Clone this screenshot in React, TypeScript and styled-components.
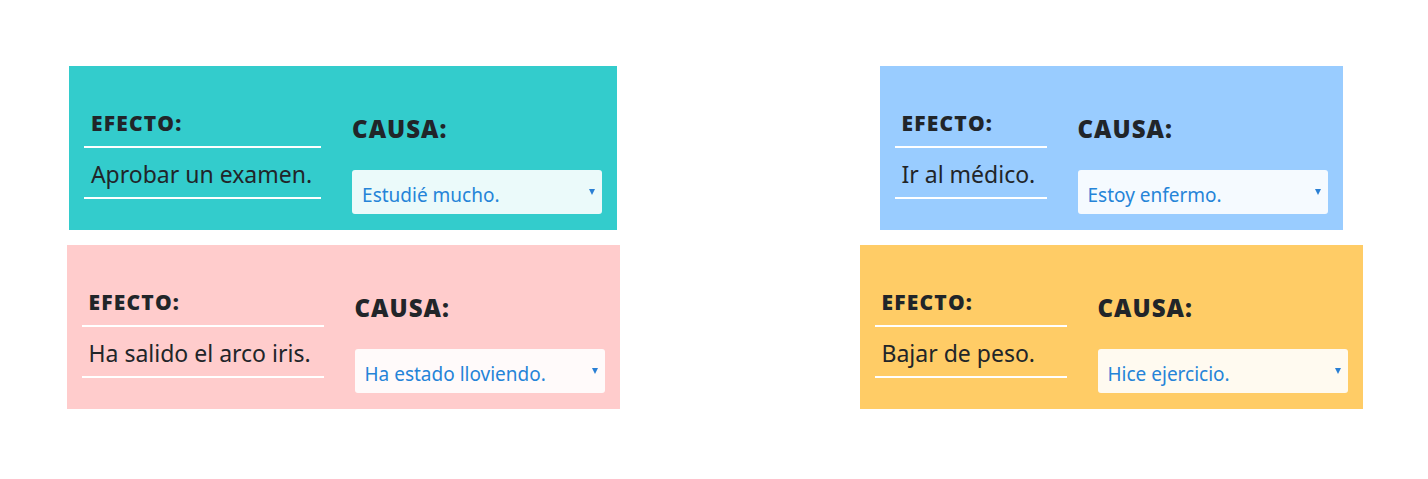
import React from 'react';
import styled, { createGlobalStyle } from 'styled-components';

const GlobalStyle = createGlobalStyle`
  html, body {
    margin: 0;
    padding: 0;
    background: #ffffff;
    font-family: "Noto Sans", "Open Sans", sans-serif;
    color: #212529;
  }
`;

const Board = styled("div")`
  display: grid;
  grid-template-columns: 606px 582px;
  column-gap: 174px;
  row-gap: 15px;
  padding: 66px 0 0 40px;
  justify-items: center;
`;

const Card = styled("div")<{ $bg: string }>`
  display: inline-flex;
  align-items: flex-start;
  gap: 31px;
  background: ${(p) => p.$bg};
  padding: 45px 15px 16px 15px;
  box-sizing: border-box;
  height: 164px;
`;

const EffectColumn = styled("div")<{ $minWidth: number }>`
  display: flex;
  flex-direction: column;
  min-width: ${(p) => p.$minWidth}px;
`;

const EffectLabel = styled("div")`
  font-family: "Open Sans", sans-serif;
  font-weight: 800;
  font-size: 21px;
  letter-spacing: 1.2px;
  line-height: 25px;
  padding: 0 8px 10px 7px;
  border-bottom: 2px solid #ffffff;
`;

const EffectText = styled("div")`
  font-size: 23px;
  line-height: 29px;
  padding: 12px 9px 8px 7px;
  border-bottom: 2px solid #ffffff;
  white-space: nowrap;
`;

const CauseColumn = styled("div")`
  display: flex;
  flex-direction: column;
  width: 250px;
  margin-top: 3px;
`;

const CauseLabel = styled("div")`
  font-family: "Open Sans", sans-serif;
  font-weight: 800;
  font-size: 24px;
  letter-spacing: 1px;
  line-height: 29px;
  margin-bottom: 27px;
`;

const SelectWrap = styled("div")`
  position: relative;
  width: 250px;
  &::after {
    content: "";
    position: absolute;
    right: 7px;
    top: 19px;
    border-left: 3px solid transparent;
    border-right: 3px solid transparent;
    border-top: 6px solid #2a7fd4;
    pointer-events: none;
  }
`;

const Select = styled("select")`
  appearance: none;
  -webkit-appearance: none;
  width: 100%;
  height: 44px;
  border: none;
  border-radius: 3px;
  background: rgba(255, 255, 255, 0.9);
  color: #2584d8;
  font-family: "Noto Sans", "Open Sans", sans-serif;
  font-size: 19px;
  padding: 5px 24px 0 10px;
  outline: none;
`;

interface Pair {
  color: string;
  effect: string;
  cause: string;
  width: number;
}

const pairs: Pair[] = [
  { color: "#33cccc", effect: "Aprobar un examen.", cause: "Estudié mucho.", width: 237 },
  { color: "#99ccff", effect: "Ir al médico.", cause: "Estoy enfermo.", width: 152 },
  { color: "#ffcccc", effect: "Ha salido el arco iris.", cause: "Ha estado lloviendo.", width: 242 },
  { color: "#ffcc66", effect: "Bajar de peso.", cause: "Hice ejercicio.", width: 192 },
];

export default function App() {
  return (
    <>
      <GlobalStyle />
      <Board>
        {pairs.map((pair) => (
          <Card key={pair.effect} $bg={pair.color}>
            <EffectColumn $minWidth={pair.width}>
              <EffectLabel>EFECTO:</EffectLabel>
              <EffectText>{pair.effect}</EffectText>
            </EffectColumn>
            <CauseColumn>
              <CauseLabel>CAUSA:</CauseLabel>
              <SelectWrap>
                <Select defaultValue={pair.cause}>
                  <option>{pair.cause}</option>
                </Select>
              </SelectWrap>
            </CauseColumn>
          </Card>
        ))}
      </Board>
    </>
  );
}
